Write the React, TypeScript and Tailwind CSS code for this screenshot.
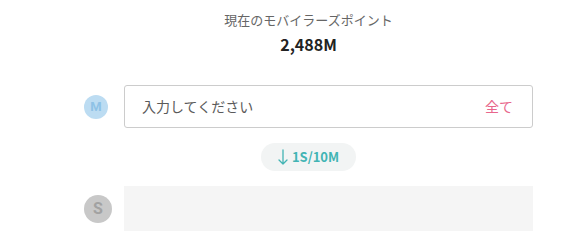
export default function App() {
  return (
    <div className="h-[246px] w-[580px] overflow-hidden bg-white font-['Noto_Sans_CJK_JP','Noto_Sans',sans-serif]">
      <div className="ml-[84px] w-[449px] pt-[11px]">
        <p className="text-center text-[13px] leading-[18px] text-[#666]">現在のモバイラーズポイント</p>
        <p className="mt-[4px] text-center text-[16px] font-bold leading-[22px] text-[#222]">2,488M</p>

        <div className="mt-[30px] flex items-center gap-[16px]">
          <div className="flex h-[24px] w-[24px] shrink-0 items-center justify-center rounded-full bg-[#bcdcf2] font-['Roboto',sans-serif] text-[13px] font-bold text-[#8ec2e6]">
            M
          </div>
          <div className="flex h-[43px] flex-1 items-center justify-between rounded-[3px] border border-[#cccccc] pl-[17px] pr-[19px]">
            <span className="text-[14px] text-[#5a5a5a]">入力してください</span>
            <span className="text-[14px] text-[#e8678c]">全て</span>
          </div>
        </div>

        <div className="mt-[15px] flex justify-center">
          <div className="flex h-[28px] items-center gap-[4px] rounded-full bg-[#f2f4f4] px-[17px] text-[13px] font-bold text-[#42b4b4]">
            <svg width="10" height="16" viewBox="0 0 10 16" fill="none" stroke="#42b4b4" strokeWidth="1.3" strokeLinecap="round" strokeLinejoin="round">
              <path d="M5 1v14M1 11l4 4 4-4" />
            </svg>
            <span>1S/10M</span>
          </div>
        </div>

        <div className="mt-[15px] flex items-center gap-[12px]">
          <div className="flex h-[28px] w-[28px] shrink-0 items-center justify-center rounded-full bg-[#c8c8c8] font-['Roboto',sans-serif] text-[16px] font-bold text-[#a2a2a2]">
            S
          </div>
          <div className="h-[45px] flex-1 bg-[#f5f5f5]" />
        </div>
      </div>
    </div>
  );
}
